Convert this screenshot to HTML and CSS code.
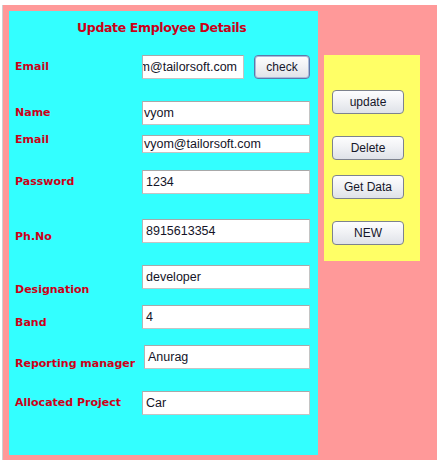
FILE: index.html
```html
<!DOCTYPE html>
<html>
<head>
<meta charset="utf-8">
<link rel="stylesheet" href="styles.css">
</head>
<body>
<div class="frame">
  <div class="form-panel">
    <div class="title">Update Employee Details</div>

    <div class="row h24 mt19">
      <div class="lbl dy4">Email</div>
      <div class="field w102 scrolled"><span>vyom@tailorsoft.com</span></div>
      <button class="btn check">check</button>
    </div>

    <div class="row h24 mt22">
      <div class="lbl dy4">Name</div>
      <div class="field tight">vyom</div>
    </div>

    <div class="row h18 mt10">
      <div class="lbl dyn3">Email</div>
      <div class="field tight">vyom@tailorsoft.com</div>
    </div>

    <div class="row h24 mt17">
      <div class="lbl dy4">Password</div>
      <div class="field">1234</div>
    </div>

    <div class="row h24 mt25">
      <div class="lbl dy10">Ph.No</div>
      <div class="field">8915613354</div>
    </div>

    <div class="row h24 mt22">
      <div class="lbl dy17">Designation</div>
      <div class="field">developer</div>
    </div>

    <div class="row h24 mt16">
      <div class="lbl dy10">Band</div>
      <div class="field">4</div>
    </div>

    <div class="row h24 mt16">
      <div class="lbl dy11">Reporting manager</div>
      <div class="field shifted">Anurag</div>
    </div>

    <div class="row h24 mt22">
      <div class="lbl dy4">Allocated Project</div>
      <div class="field">Car</div>
    </div>
  </div>

  <div class="action-panel">
    <button class="btn act">update</button>
    <button class="btn act mt23">Delete</button>
    <button class="btn act mt15">Get Data</button>
    <button class="btn act mt22b">NEW</button>
  </div>
</div>
</body>
</html>
```

FILE: styles.css
```css
html, body {
  margin: 0;
  padding: 0;
  background: #ffffff;
  width: 437px;
  height: 460px;
  overflow: hidden;
}

.frame {
  margin: 5px 0 0 2px;
  height: 455px;
  background: #ff9999;
  display: flex;
  align-items: flex-start;
  padding: 6px 0 0 6px;
  box-sizing: border-box;
  border-left: 1px solid #d0d0d0;
}

.form-panel {
  width: 309px;
  height: 444px;
  background: #33ffff;
  display: flex;
  flex-direction: column;
  padding-left: 6px;
  box-sizing: border-box;
}

.title {
  margin: 8px 0 0 62px;
  font-family: "DejaVu Sans", sans-serif;
  font-weight: bold;
  font-size: 12.5px;
  letter-spacing: -0.35px;
  line-height: 17px;
  color: #cc0018;
  white-space: nowrap;
}

.row {
  display: flex;
  align-items: flex-start;
}
.h24 { height: 24px; }
.h18 { height: 18px; }
.mt10 { margin-top: 10px; }
.mt16 { margin-top: 16px; }
.mt17 { margin-top: 17px; }
.mt19 { margin-top: 19px; }
.mt22 { margin-top: 22px; }
.mt25 { margin-top: 25px; }

.lbl {
  width: 127px;
  flex: none;
  font-family: "DejaVu Sans", sans-serif;
  font-weight: bold;
  font-size: 11px;
  line-height: 16px;
  color: #cc0018;
  white-space: nowrap;
}
.dy4 { margin-top: 4px; }
.dyn3 { margin-top: -3px; }
.dy10 { margin-top: 10px; }
.dy11 { margin-top: 11px; }
.dy17 { margin-top: 17px; }

.field {
  width: 168px;
  height: 100%;
  box-sizing: border-box;
  background: #ffffff;
  border: 1px solid #c4c4c4;
  border-top-color: #a8a8a8;
  border-left-color: #b4b4b4;
  padding: 0 2px 0 3px;
  display: flex;
  align-items: center;
  font-family: "Liberation Sans", Arial, sans-serif;
  font-size: 12.5px;
  color: #141428;
  white-space: nowrap;
  overflow: hidden;
}
.field.tight { padding-left: 1px; }
.field.shifted { margin-left: 2px; width: 166px; padding-left: 3px; }
.field.w102 { width: 102px; flex: none; }
.field.scrolled { justify-content: flex-end; padding-right: 6px; }
.field.scrolled span { flex: none; }

.btn {
  box-sizing: border-box;
  height: 24px;
  margin: 0;
  padding: 0;
  border: 1px solid #7d828e;
  border-radius: 4px;
  background: linear-gradient(#fdfdfe 0%, #f1f2f5 45%, #dfe2e8 100%);
  font-family: "Liberation Sans", Arial, sans-serif;
  font-size: 12px;
  color: #16162a;
  flex: none;
}

.check {
  width: 56px;
  margin-left: 10px;
  border: 1px solid #5e78a8;
  box-shadow: inset 0 0 0 1px #a9bbdb;
}

.action-panel {
  width: 96px;
  height: 206px;
  margin: 44px 0 0 6px;
  background: #ffff66;
  display: flex;
  flex-direction: column;
  align-items: flex-start;
  padding: 35px 0 0 8px;
  box-sizing: border-box;
}

.act { width: 72px; }
.mt23 { margin-top: 22px; }
.mt15 { margin-top: 15px; }
.mt22b { margin-top: 22px; }
```
